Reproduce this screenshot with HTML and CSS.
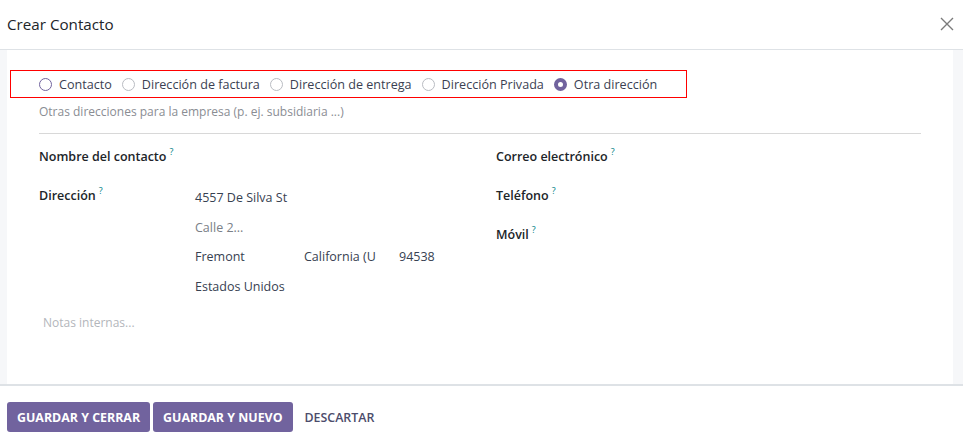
FILE: index.html
```html
<!DOCTYPE html>
<html lang="es">
<head>
<meta charset="utf-8">
<title>Crear Contacto</title>
<link rel="stylesheet" href="styles.css">
</head>
<body>
<div class="modal">
  <header class="modal-header">
    <h4 class="modal-title">Crear Contacto</h4>
    <button class="close" aria-label="Cerrar">
      <svg width="14" height="14" viewBox="0 0 14 14"><path d="M1 1 L13 13 M13 1 L1 13" stroke="#7b7b7b" stroke-width="1.4" fill="none"/></svg>
    </button>
  </header>
  <div class="modal-body">
    <div class="gutter-left"></div>
    <div class="sheet">
      <div class="radio-row">
        <label class="radio"><span class="dot focus"></span>Contacto</label>
        <label class="radio"><span class="dot"></span>Dirección de factura</label>
        <label class="radio"><span class="dot"></span>Dirección de entrega</label>
        <label class="radio"><span class="dot"></span>Dirección Privada</label>
        <label class="radio"><span class="dot checked"></span>Otra dirección</label>
      </div>
      <p class="hint">Otras direcciones para la empresa (p. ej. subsidiaria ...)</p>
      <hr class="sep">
      <div class="fields">
        <div class="col">
          <div class="field">
            <span class="label">Nombre del contacto<sup>?</sup></span>
          </div>
          <div class="field field-address">
            <span class="label">Dirección<sup>?</sup></span>
            <div class="address">
              <div class="line">4557 De Silva St</div>
              <div class="line placeholder">Calle 2...</div>
              <div class="line split">
                <span class="city">Fremont</span>
                <span class="state">California (U</span>
                <span class="zip">94538</span>
              </div>
              <div class="line">Estados Unidos</div>
            </div>
          </div>
        </div>
        <div class="col col-right">
          <div class="field"><span class="label">Correo electrónico<sup>?</sup></span></div>
          <div class="field"><span class="label">Teléfono<sup>?</sup></span></div>
          <div class="field"><span class="label">Móvil<sup>?</sup></span></div>
        </div>
      </div>
      <div class="notes">Notas internas...</div>
    </div>
    <div class="gutter-right"></div>
  </div>
  <footer class="modal-footer">
    <button class="btn btn-primary">GUARDAR Y CERRAR</button>
    <button class="btn btn-primary">GUARDAR Y NUEVO</button>
    <button class="btn btn-link">DESCARTAR</button>
  </footer>
</div>
</body>
</html>
```
FILE: styles.css
```css
* { box-sizing: border-box; }
html, body {
  margin: 0;
  padding: 0;
  background: #fff;
}
body {
  font-family: "Open Sans", "Noto Sans", sans-serif;
  font-size: 12.5px;
  color: #212529;
  width: 963px;
  height: 444px;
  overflow: hidden;
}
.modal {
  display: flex;
  flex-direction: column;
  height: 444px;
}
.modal-header {
  height: 50px;
  border-bottom: 1px solid #dee2e6;
  display: flex;
  align-items: center;
  justify-content: space-between;
  padding: 0 9px 2px 7px;
}
.modal-title {
  margin: 0;
  font-size: 15.2px;
  font-weight: 500;
  color: #212529;
}
.close {
  border: 0;
  background: none;
  padding: 0;
  width: 14px;
  height: 14px;
  display: flex;
}
.modal-body {
  display: flex;
  height: 334px;
}
.gutter-left {
  width: 7px;
  background: #f6f7f9;
}
.gutter-right {
  width: 10px;
  background: #f6f7f9;
}
.sheet {
  flex: 1;
  background: #fff;
  padding: 20px 32px 0 32px;
}
.radio-row {
  display: inline-flex;
  align-items: center;
  height: 28px;
  margin-left: -29px;
  padding: 0 29px 0 28px;
  border: 1px solid #ff0000;
  gap: 10px;
}
.radio {
  display: inline-flex;
  align-items: center;
  gap: 7px;
  color: #3b3f52;
  font-size: 12.6px;
  font-weight: 500;
}
.dot {
  width: 13px;
  height: 13px;
  border-radius: 50%;
  border: 1px solid #b9bcc2;
  background: #fff;
  display: inline-block;
}
.dot.focus {
  border-color: #71639e;
}
.dot.checked {
  border: 4px solid #71639e;
  background: #fff;
}
.hint {
  margin: 4px 0 0;
  line-height: 20px;
  color: #8a8d93;
  font-size: 12px;
}
.sep {
  margin: 11px 0 0;
  border: 0;
  border-top: 1px solid #d8d8d8;
}
.fields {
  display: grid;
  grid-template-columns: 1fr 1fr;
  column-gap: 32px;
  margin-top: 13px;
}
.col {
  display: flex;
  flex-direction: column;
  gap: 19px;
}
.field {
  display: flex;
  line-height: 20px;
}
.label {
  width: 156px;
  flex: none;
  font-weight: 600;
  color: #212529;
  white-space: nowrap;
}
.label sup {
  font-size: 9px;
  font-weight: 500;
  color: #017e84;
  margin-left: 3px;
  vertical-align: 6px;
  line-height: 0;
}
.address {
  padding-top: 2px;
  display: flex;
  flex-direction: column;
  gap: 9.5px;
}
.line {
  line-height: 20px;
  color: #374151;
}
.line.placeholder {
  color: #7a7f87;
}
.split {
  display: flex;
}
.city { width: 109px; }
.state { width: 95px; overflow: hidden; white-space: nowrap; }
.notes {
  margin-top: 16px;
  padding-left: 4px;
  line-height: 20px;
  color: #b3b6bb;
  font-size: 12px;
}
.modal-footer {
  border-top: 2px solid #dee2e6;
  flex: 1;
  display: flex;
  align-items: flex-start;
  padding: 16px 7px 0;
  gap: 3px;
}
.btn {
  font-family: inherit;
  font-size: 12.4px;
  font-weight: 700;
  height: 30px;
  border-radius: 3px;
  border: 0;
  padding: 0 10px;
  cursor: pointer;
}
.btn-primary {
  background: #71639e;
  color: #fff;
}
.btn-link {
  background: none;
  color: #4c4c6b;
  font-weight: 600;
  padding: 0 9px;
}
```
